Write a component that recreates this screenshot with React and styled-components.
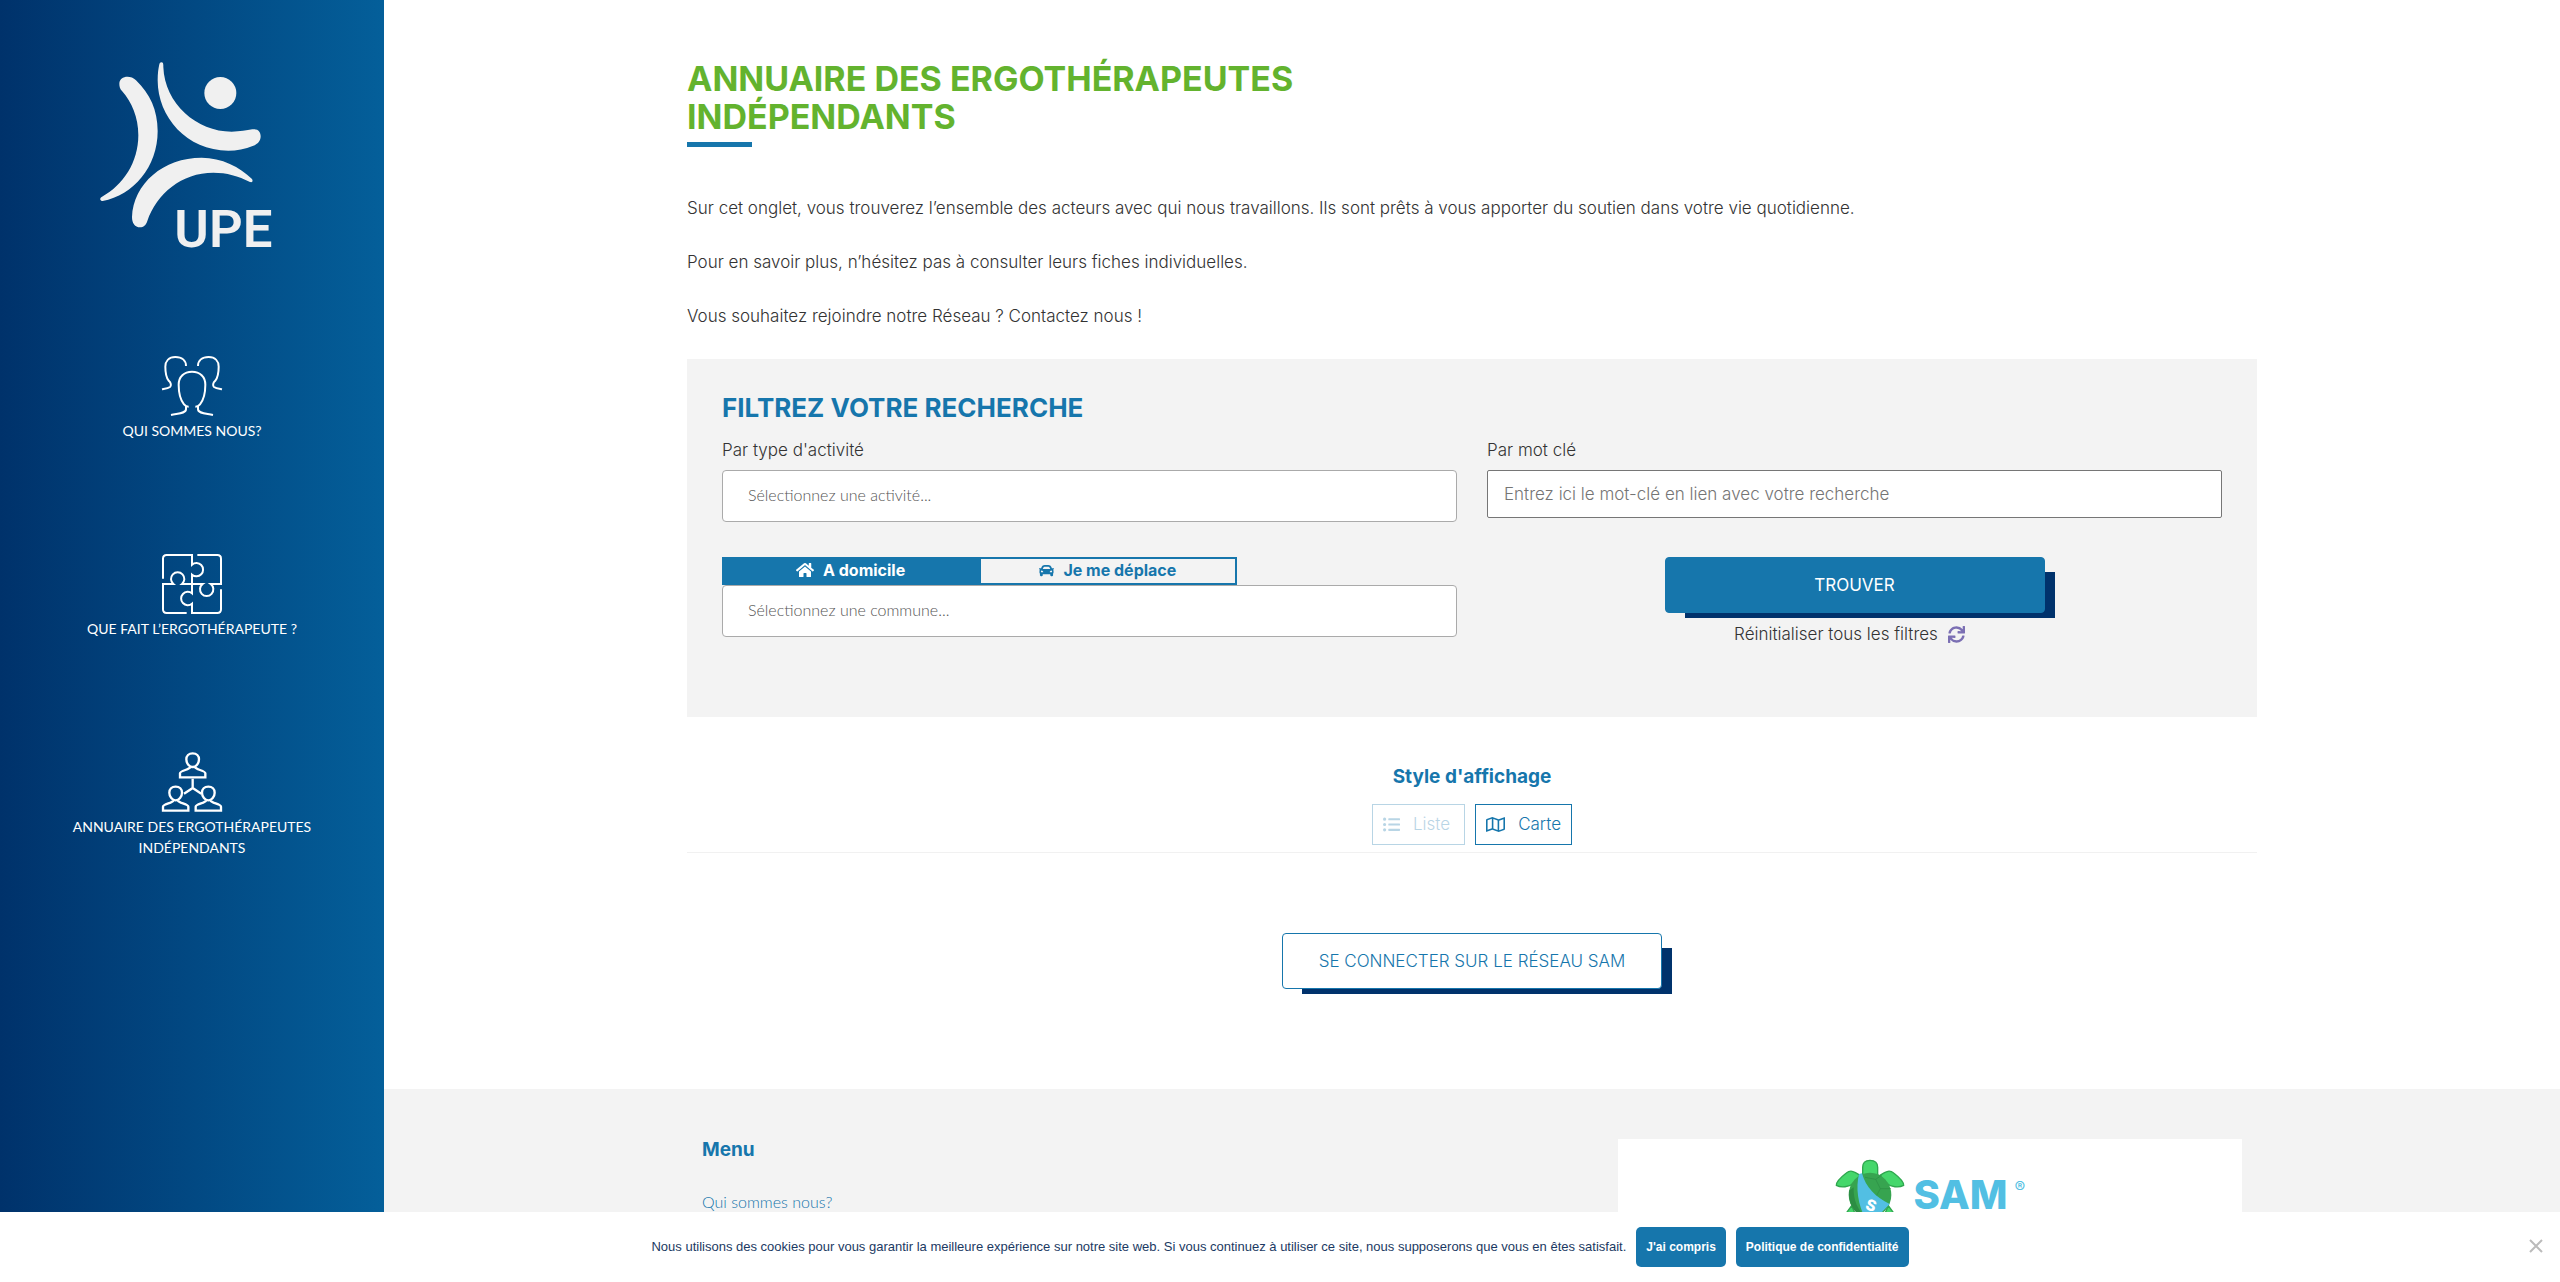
import React from "react";
import styled, { createGlobalStyle } from "styled-components";
import { FaHome, FaCar, FaSync, FaListUl, FaRegMap } from "react-icons/fa";

const activities = ["Sélectionnez une activité..."];
const towns = ["Sélectionnez une commune..."];

export default function App() {
  const menu = [
    { icon: <PeopleIcon />, label: "Qui sommes nous?" },
    { icon: <PuzzleIcon />, label: "Que fait l’ergothérapeute ?" },
    {
      icon: <NetworkIcon />,
      label: "Annuaire des ergothérapeutes indépendants",
    },
  ];
  return (
    <>
      <GlobalStyle />
      <Page>
        <Sidebar>
          <a href="#accueil" aria-label="UPE">
            <UpeLogo />
          </a>
          <nav>
            {menu.map(({ icon, label }) => (
              <MenuLink href="#menu" key={label}>
                {icon}
                <span>{label}</span>
              </MenuLink>
            ))}
          </nav>
        </Sidebar>
        <Content>
          <Container>
            <Title>Annuaire des ergothérapeutes indépendants</Title>
            <Intro>
              <p>
                Sur cet onglet, vous trouverez l’ensemble des acteurs avec qui
                nous travaillons. Ils sont prêts à vous apporter du soutien dans
                votre vie quotidienne.
              </p>
              <p>
                Pour en savoir plus, n’hésitez pas à consulter leurs fiches
                individuelles.
              </p>
              <p>Vous souhaitez rejoindre notre Réseau ? Contactez nous !</p>
            </Intro>
            <Filters onSubmit={(e) => e.preventDefault()}>
              <h2>Filtrez votre recherche</h2>
              <div className="grid">
                <Field>
                  <label htmlFor="activity">Par type d'activité</label>
                  <Select id="activity">
                    {activities.map((a) => (
                      <option key={a}>{a}</option>
                    ))}
                  </Select>
                </Field>
                <Field>
                  <label htmlFor="keyword">Par mot clé</label>
                  <TextInput
                    id="keyword"
                    type="text"
                    placeholder="Entrez ici le mot-clé en lien avec votre recherche"
                  />
                </Field>
                <div>
                  <Tabs>
                    <Tab type="button" $active>
                      <FaHome size={18} /> A domicile
                    </Tab>
                    <Tab type="button">
                      <FaCar size={15} /> Je me déplace
                    </Tab>
                  </Tabs>
                  <Select aria-label="Commune">
                    {towns.map((t) => (
                      <option key={t}>{t}</option>
                    ))}
                  </Select>
                </div>
                <Actions>
                  <ShadowButton as="button" $filled>
                    Trouver
                  </ShadowButton>
                  <ResetLink href="#reset">
                    Réinitialiser tous les filtres <FaSync size={17} />
                  </ResetLink>
                </Actions>
              </div>
            </Filters>
            <Display>
              <h3>Style d'affichage</h3>
              <div>
                <ViewButton type="button" disabled>
                  <FaListUl size={17} /> Liste
                </ViewButton>
                <ViewButton type="button">
                  <FaRegMap size={19} /> Carte
                </ViewButton>
              </div>
            </Display>
            <Connect>
              <ShadowButton href="#sam">
                Se connecter sur le réseau SAM
              </ShadowButton>
            </Connect>
          </Container>
          <Footer>
            <FooterGrid>
              <FooterMenu>
                <h4>Menu</h4>
                <a href="#menu">Qui sommes nous?</a>
              </FooterMenu>
              <SamCard>
                <Turtle />
                <strong>SAM</strong>
                <sup>®</sup>
              </SamCard>
            </FooterGrid>
          </Footer>
        </Content>
      </Page>
      <CookieBar>
        <span>
          Nous utilisons des cookies pour vous garantir la meilleure expérience
          sur notre site web. Si vous continuez à utiliser ce site, nous
          supposerons que vous en êtes satisfait.
        </span>
        <CookieButton type="button">J'ai compris</CookieButton>
        <CookieButton type="button">Politique de confidentialité</CookieButton>
        <CloseButton type="button" aria-label="Fermer">
          <svg width="14" height="14" viewBox="0 0 14 14">
            <path d="M1 1L13 13M13 1L1 13" stroke="#bbb" strokeWidth="2" />
          </svg>
        </CloseButton>
      </CookieBar>
    </>
  );
}

function UpeLogo() {
  return (
    <svg width="184" height="187" viewBox="300 185 552 561" fill="#f0f0f0">
      <path d="M358 250C358 228 390 222 408 240C450 280 473 330 473 392C473 500 400 585 308 602C300 602 298 594 305 590C370 555 415 485 415 405C415 350 395 305 366 272C360 266 358 258 358 250Z" />
      <path d="M484 186C490 186 490 192 490 200C494 310 590 394 695 394C720 394 740 390 757 387C775 384 782 396 782 408C782 422 774 431 760 436C735 446 710 451 685 451C560 451 473 350 473 240C473 220 475 205 478 192C479 188 481 186 484 186Z" />
      <circle cx="661" cy="278" r="48" />
      <path d="M396 650C400 550 490 472 605 472C665 472 720 500 756 536C760 542 757 547 750 545C715 527 680 517 640 517C545 517 470 580 442 662C438 675 430 681 420 681C405 681 396 668 396 650Z" />
      <text x="523" y="741" fontFamily="Roboto, sans-serif" fontSize="158" fontWeight="600">
        UPE
      </text>
    </svg>
  );
}

function PeopleIcon() {
  return (
    <svg viewBox="0 0 180 180" strokeWidth="6">
      <path d="M80 152C74 152 70 150 66 145C54 130 50 105 50 86C50 62 66 47 90 47C114 47 130 62 130 86C130 105 126 130 114 145C110 150 106 152 100 152" />
      <path d="M72 150V160C72 172 50 172 27 177M108 150V160C108 172 130 172 153 177" />
      <path d="M72 30C72 14 60 3 40 3C20 3 10 16 10 32C10 48 14 66 20 74C28 80 28 90 24 93C18 97 10 98 0 100" />
      <path d="M108 30C108 14 120 3 140 3C160 3 170 16 170 32C170 48 166 66 160 74C152 80 152 90 156 93C162 97 170 98 180 100" />
    </svg>
  );
}

function PuzzleIcon() {
  return (
    <svg viewBox="0 0 180 180" strokeWidth="6">
      <path d="M3 74V14Q3 3 14 3H90V32A20 20 0 1 1 90 62V118A20 20 0 1 0 90 149V177H166Q177 177 177 166V106" />
      <path d="M74 177H14Q3 177 3 166V90H34A20 20 0 1 1 60 90H122A20 20 0 1 0 146 90H177V14Q177 3 166 3H106" />
    </svg>
  );
}

function Person({ x, y }) {
  return (
    <g transform={`translate(${x} ${y})`}>
      <path d="M0 4C-12 4-19 12-19 22C-19 34-10 45 0 45C10 45 19 34 19 22C19 12 12 4 0 4Z" />
      <path d="M-7 46C-10 53-38 56-38 64V76H38V64C38 56 10 53 7 46" />
    </g>
  );
}

function NetworkIcon() {
  return (
    <svg viewBox="0 0 180 180" strokeWidth="7">
      <Person x={92} y={0} />
      <Person x={41} y={100} />
      <Person x={139} y={100} />
      <path d="M92 80V108L66 125M92 108L118 125" />
    </svg>
  );
}

function Turtle() {
  return (
    <svg width="70" height="67" viewBox="50 25 210 201">
      <g fill="#45d76b" stroke="#2fa64e" strokeWidth="4">
        <path d="M133 85V50C133 36 142 29 155 29C168 29 178 36 178 50V85Z" />
        <path d="M125 74C105 60 95 58 84 67C66 81 53 95 54 104C68 112 92 110 108 96Z" />
        <path d="M185 74C205 60 215 58 226 67C244 81 257 95 256 104C242 112 218 110 202 96Z" />
        <path d="M100 165L82 190C86 210 104 212 115 200ZM210 165L228 190C224 210 206 212 195 200Z" />
      </g>
      <ellipse cx="155" cy="133" rx="64" ry="67" fill="#37a450" />
      <path d="M92 120C90 160 110 194 142 200C120 180 104 150 106 110Z" fill="#2c8d44" />
      <g fill="none" stroke="#2c8d44" strokeWidth="2">
        <path d="M140 80L172 86L186 114L172 140M172 86L190 74M186 114H218M172 140L186 160" />
      </g>
      <path d="M122 70C112 110 118 162 142 205L176 200L214 160C172 140 142 110 131 68Z" fill="#52bfe3" />
      <text x="143" y="180" fill="#fff" fontFamily="Inter, sans-serif" fontSize="46" fontWeight="800" transform="rotate(20 157 165)">
        S
      </text>
    </svg>
  );
}

const GlobalStyle = createGlobalStyle`
  * {
    box-sizing: border-box;
  }
  body {
    margin: 0;
    background-color: #fff;
    color: #333;
    font-family: Inter, sans-serif;
    font-size: 17px;
    font-weight: 300;
    line-height: 27px;
  }
  h1, h2, h3, h4, p {
    margin: 0;
  }
  a {
    text-decoration: none;
  }
  button, input, select {
    font: inherit;
  }
`;

const Page = styled.div`
  display: flex;
  min-height: 100vh;
`;

const Sidebar = styled.aside`
  width: 15%;
  flex-shrink: 0;
  padding-top: 62px;
  display: flex;
  flex-direction: column;
  align-items: center;
  gap: 107px;
  background: linear-gradient(to right, #00326b, #045f9a);
  a svg {
    display: block;
    overflow: visible;
  }
  nav {
    display: flex;
    flex-direction: column;
    gap: 113px;
  }
`;

const MenuLink = styled.a`
  display: flex;
  flex-direction: column;
  align-items: center;
  gap: 4px;
  max-width: 270px;
  color: #fff;
  font-family: Lato, sans-serif;
  font-size: 14px;
  font-weight: 400;
  line-height: 21px;
  text-align: center;
  text-transform: uppercase;
  svg {
    width: 60px;
    height: 60px;
    fill: none;
    stroke: #fff;
  }
`;

const Content = styled.div`
  flex: 1;
  min-width: 0;
  display: flex;
  flex-direction: column;
`;

const Container = styled.main`
  width: 100%;
  max-width: 1570px;
  margin: 0 auto;
  padding-top: 60px;
`;

const Title = styled.h1`
  max-width: 785px;
  color: #63b32e;
  font-size: 34px;
  font-weight: 700;
  line-height: 38px;
  text-transform: uppercase;
  &::after {
    content: "";
    display: block;
    width: 65px;
    height: 5px;
    margin-top: 6px;
    background-color: #1676ac;
  }
`;

const Intro = styled.div`
  display: flex;
  flex-direction: column;
  gap: 27px;
  margin: 48px 0 29px;
`;

const Filters = styled.form`
  padding: 34px 35px 69px;
  background-color: #f3f3f3;
  h2 {
    margin-bottom: 15px;
    color: #1676ac;
    font-size: 26px;
    font-weight: 700;
    line-height: 30px;
    text-transform: uppercase;
  }
  .grid {
    display: grid;
    grid-template-columns: 1fr 1fr;
    gap: 35px 30px;
  }
`;

const Field = styled.div`
  display: flex;
  flex-direction: column;
  gap: 8px;
  label {
    line-height: 24px;
  }
`;

const Select = styled.select`
  display: block;
  width: 100%;
  height: 52px;
  padding: 0 25px 4px;
  appearance: none;
  border: 1px solid #aaa;
  border-radius: 4px;
  background-color: #fff;
  color: #555;
  font-family: Lato, sans-serif;
  font-size: 16px;
`;

const TextInput = styled.input`
  width: 100%;
  height: 48px;
  padding: 0 16px;
  border: 1px solid #767676;
  border-radius: 2px;
  background-color: #fff;
  &::placeholder {
    color: #757575;
  }
`;

const Tabs = styled.div`
  display: flex;
  width: 70%;
`;

const Tab = styled.button`
  flex: 1;
  height: 28px;
  display: flex;
  align-items: center;
  justify-content: center;
  gap: 9px;
  padding: 0 0 2px;
  border: 2px solid #1676ac;
  background-color: ${({ $active }) => ($active ? "#1676ac" : "transparent")};
  color: ${({ $active }) => ($active ? "#fff" : "#1676ac")};
  font-size: 16px;
  font-weight: 700;
`;

const Actions = styled.div`
  display: flex;
  flex-direction: column;
  align-items: center;
  gap: 8px;
`;

const ShadowButton = styled.a`
  position: relative;
  z-index: 0;
  width: 380px;
  height: 56px;
  padding: 0;
  border: 0;
  background: none;
  display: flex;
  align-items: center;
  justify-content: center;
  color: ${({ $filled }) => ($filled ? "#fff" : "#1676ac")};
  font-weight: ${({ $filled }) => ($filled ? 400 : 300)};
  text-transform: uppercase;
  &::before,
  &::after {
    content: "";
    position: absolute;
    z-index: -1;
  }
  &::before {
    inset: 15px -10px -5px 20px;
    background-color: #00326c;
  }
  &::after {
    inset: 0;
    border: 1px solid #1676ac;
    border-radius: 4px;
    background-color: ${({ $filled }) => ($filled ? "#1676ac" : "#fff")};
  }
`;

const ResetLink = styled.a`
  display: flex;
  align-items: center;
  gap: 10px;
  margin-right: 10px;
  color: #333;
  svg {
    color: #7b6fb3;
  }
`;

const Display = styled.section`
  display: flex;
  flex-direction: column;
  align-items: center;
  gap: 15px;
  padding: 48px 0 7px;
  border-bottom: 1px solid #f1f1f1;
  h3 {
    color: #1676ac;
    font-size: 19px;
    font-weight: 700;
    line-height: 24px;
  }
  div {
    display: flex;
    gap: 10px;
  }
`;

const ViewButton = styled.button`
  height: 41px;
  display: flex;
  align-items: center;
  gap: 13px;
  padding: 0 10px;
  border: 1px solid #1676ac;
  background-color: #fff;
  color: #1676ac;
  &:disabled {
    padding-right: 14px;
    opacity: 0.3;
  }
`;

const Connect = styled.div`
  display: flex;
  justify-content: center;
  padding: 80px 0 100px;
`;

const Footer = styled.footer`
  flex: 1;
  display: flex;
  justify-content: center;
  background-color: #f3f3f3;
`;

const FooterGrid = styled.div`
  width: 100%;
  max-width: 1570px;
  padding-top: 50px;
  display: grid;
  grid-template-columns: 7fr 5fr;
`;

const FooterMenu = styled.div`
  padding: 0 15px;
  h4 {
    margin-bottom: 28px;
    color: #1676ac;
    font-size: 19px;
    font-weight: 700;
    line-height: 21px;
  }
  a {
    color: #1676ac;
    font-family: Lato, sans-serif;
    font-size: 16px;
  }
`;

const SamCard = styled.div`
  margin: 0 15px;
  padding-top: 20px;
  display: flex;
  justify-content: center;
  align-items: flex-start;
  background-color: #fff;
  color: #52bfe3;
  strong {
    margin: 15px 7px 0 9px;
    font-size: 40px;
    font-weight: 800;
    line-height: 42px;
  }
  sup {
    margin-top: 20px;
    font-size: 16px;
    font-weight: 400;
    line-height: 17px;
  }
`;

const CookieBar = styled.div`
  position: fixed;
  inset: auto 0 0;
  z-index: 10;
  height: 70px;
  display: flex;
  align-items: center;
  justify-content: center;
  gap: 10px;
  background-color: #fff;
  color: #1b3a63;
  font-family: "Liberation Sans", sans-serif;
  font-size: 13px;
  font-weight: 400;
  line-height: 20px;
`;

const CookieButton = styled.button`
  height: 40px;
  padding: 0 10px;
  border: 0;
  border-radius: 5px;
  background-color: #1676ac;
  color: #fff;
  font-size: 12px;
  font-weight: 700;
`;

const CloseButton = styled.button`
  position: absolute;
  right: 17px;
  padding: 0;
  border: 0;
  background: none;
  line-height: 14px;
`;
